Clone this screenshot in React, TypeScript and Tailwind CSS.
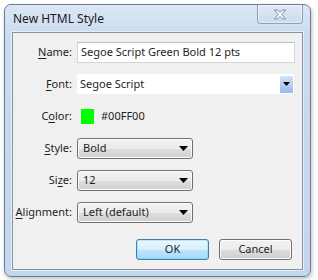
import React from "react";

function Label({ text, keyIndex }: { text: string; keyIndex: number }) {
  return (
    <span className="w-[59px] shrink-0 text-right">
      {text.slice(0, keyIndex)}
      <span className="underline underline-offset-[2px]">{text[keyIndex]}</span>
      {text.slice(keyIndex + 1)}:
    </span>
  );
}

function Arrow() {
  return (
    <svg width="9" height="5" viewBox="0 0 9 5" className="shrink-0">
      <path d="M0 0h9L4.5 5z" fill="#000" />
    </svg>
  );
}

function SelectButton({ value }: { value: string }) {
  return (
    <div className="ml-[5px] flex h-[21px] w-[116px] items-center justify-between rounded-[3px] border border-[#707070] bg-[linear-gradient(#f2f2f2_0%,#ebebeb_50%,#dddddd_51%,#cfcfcf_100%)] pl-[5px] pr-[4px] shadow-[inset_0_0_0_1px_#fcfcfc]">
      <span>{value}</span>
      <Arrow />
    </div>
  );
}

function Row({ children }: { children: React.ReactNode }) {
  return <div className="flex h-[32px] items-center">{children}</div>;
}

export default function App() {
  return (
    <div
      className="h-[280px] w-[318px] bg-white pl-[4px] pt-[4px] text-[11px] text-[#1e1e1e]"
      style={{ fontFamily: '"Noto Sans", "Open Sans", sans-serif' }}
    >
      <div className="flex h-[273px] w-[307px] flex-col rounded-[7px] border border-[#6b7b91] bg-[linear-gradient(#dce7f5_0%,#c9dbf0_12%,#c3d6ee_100%)] shadow-[1px_2px_4px_rgba(0,0,0,0.25)]">
        <div className="flex h-[27px] shrink-0 items-start justify-between">
          <span className="pl-[8px] pt-[6px] text-[12px] leading-[16px] text-[#1a1a1a]">New HTML Style</span>
          <div className="mr-[7px] flex h-[19px] w-[46px] items-center justify-center rounded-b-[4px] border border-t-0 border-[#8d9db4] bg-[linear-gradient(#e1eaf6,#cbdaee)] shadow-[inset_0_0_0_1px_rgba(255,255,255,0.5)]">
            <svg width="14" height="11" viewBox="0 0 14 11">
              <path
                d="M1.5 1h3L7 3.5 9.5 1h3L8.8 5.5l3.7 4.5h-3L7 7.5 4.5 10h-3l3.7-4.5z"
                fill="#fff"
                stroke="#7d8796"
                strokeWidth="1"
                strokeLinejoin="round"
              />
            </svg>
          </div>
        </div>
        <div className="mx-[7px] flex h-[238px] flex-col border border-[#8593a6] bg-[#f0f0f0] pt-[3px] shadow-[0_0_0_1px_#e6eef8]">
          <Row>
            <Label text="Name" keyIndex={0} />
            <div className="ml-[5px] flex h-[21px] w-[218px] items-center border border-[#d3d7dd] border-t-[#b9bdc4] bg-white pl-[3px]">
              Segoe Script Green Bold 12 pts
            </div>
          </Row>
          <Row>
            <Label text="Font" keyIndex={0} />
            <div className="ml-[5px] flex h-[20px] w-[217px] items-center justify-between bg-white pl-[3px] pr-[1px]">
              <span>Segoe Script</span>
              <div className="flex h-[17px] w-[13px] items-center justify-center bg-[linear-gradient(#d3e3f8,#9ab9e6)]">
                <svg width="7" height="4" viewBox="0 0 7 4">
                  <path d="M0 0h7L3.5 4z" fill="#000" />
                </svg>
              </div>
            </div>
          </Row>
          <Row>
            <Label text="Color" keyIndex={1} />
            <div className="ml-[9px] h-[15px] w-[13px] bg-[#00ff00]" />
            <span className="ml-[7px]">#00FF00</span>
          </Row>
          <Row>
            <Label text="Style" keyIndex={0} />
            <SelectButton value="Bold" />
          </Row>
          <Row>
            <Label text="Size" keyIndex={2} />
            <SelectButton value="12" />
          </Row>
          <Row>
            <Label text="Alignment" keyIndex={0} />
            <SelectButton value="Left (default)" />
          </Row>
          <div className="mt-[11px] flex justify-end gap-[10px] pr-[10px]">
            <div className="flex h-[21px] w-[73px] items-center justify-center rounded-[3px] border border-[#3c7fb1] bg-[linear-gradient(#eaf6fd_0%,#d9f0fc_50%,#bee6fd_51%,#a7d9f5_100%)] shadow-[inset_0_0_0_1px_#48d5fc55]">
              OK
            </div>
            <div className="flex h-[21px] w-[73px] items-center justify-center rounded-[3px] border border-[#707070] bg-[linear-gradient(#f2f2f2_0%,#ebebeb_50%,#dddddd_51%,#cfcfcf_100%)] shadow-[inset_0_0_0_1px_#fcfcfc]">
              Cancel
            </div>
          </div>
        </div>
      </div>
    </div>
  );
}
